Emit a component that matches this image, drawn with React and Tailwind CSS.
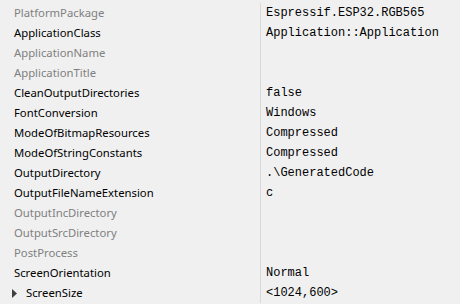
import React from 'react';

const rows = [
  { name: 'PlatformPackage', value: 'Espressif.ESP32.RGB565', dim: true },
  { name: 'ApplicationClass', value: 'Application::Application' },
  { name: 'ApplicationName', value: '', dim: true },
  { name: 'ApplicationTitle', value: '', dim: true },
  { name: 'CleanOutputDirectories', value: 'false' },
  { name: 'FontConversion', value: 'Windows' },
  { name: 'ModeOfBitmapResources', value: 'Compressed' },
  { name: 'ModeOfStringConstants', value: 'Compressed' },
  { name: 'OutputDirectory', value: '.\\GeneratedCode' },
  { name: 'OutputFileNameExtension', value: 'c' },
  { name: 'OutputIncDirectory', value: '', dim: true },
  { name: 'OutputSrcDirectory', value: '', dim: true },
  { name: 'PostProcess', value: '', dim: true },
  { name: 'ScreenOrientation', value: 'Normal' },
  { name: 'ScreenSize', value: '<1024,600>', expandable: true },
];

function Row({ name, value, dim, expandable }) {
  return (
    <div className="flex h-5 items-center">
      <div className="flex w-[260px] shrink-0 items-center pl-[14px]">
        {expandable && (
          <svg width="5" height="9" viewBox="0 0 5 9" className="ml-[-2px] mr-[9px]">
            <path d="M0 0 L5 4.5 L0 9 Z" fill="#404040" />
          </svg>
        )}
        <span
          className={`text-[11.3px] leading-5 ${dim ? 'text-[#808080]' : 'text-black'}`}
          style={{ fontFamily: '"Noto Sans", "Open Sans", sans-serif' }}
        >
          {name}
        </span>
      </div>
      <div className="h-5 w-px shrink-0 bg-[#d9d9d9]" />
      <div
        className="pl-[5px] text-[12px] leading-5 text-black"
        style={{ fontFamily: '"Liberation Mono", monospace' }}
      >
        {value}
      </div>
    </div>
  );
}

export default function App() {
  return (
    <div className="h-[304px] w-[460px] overflow-hidden bg-[#f0f0f0] pt-[3px]">
      {rows.map((r) => (
        <Row key={r.name} {...r} />
      ))}
    </div>
  );
}
